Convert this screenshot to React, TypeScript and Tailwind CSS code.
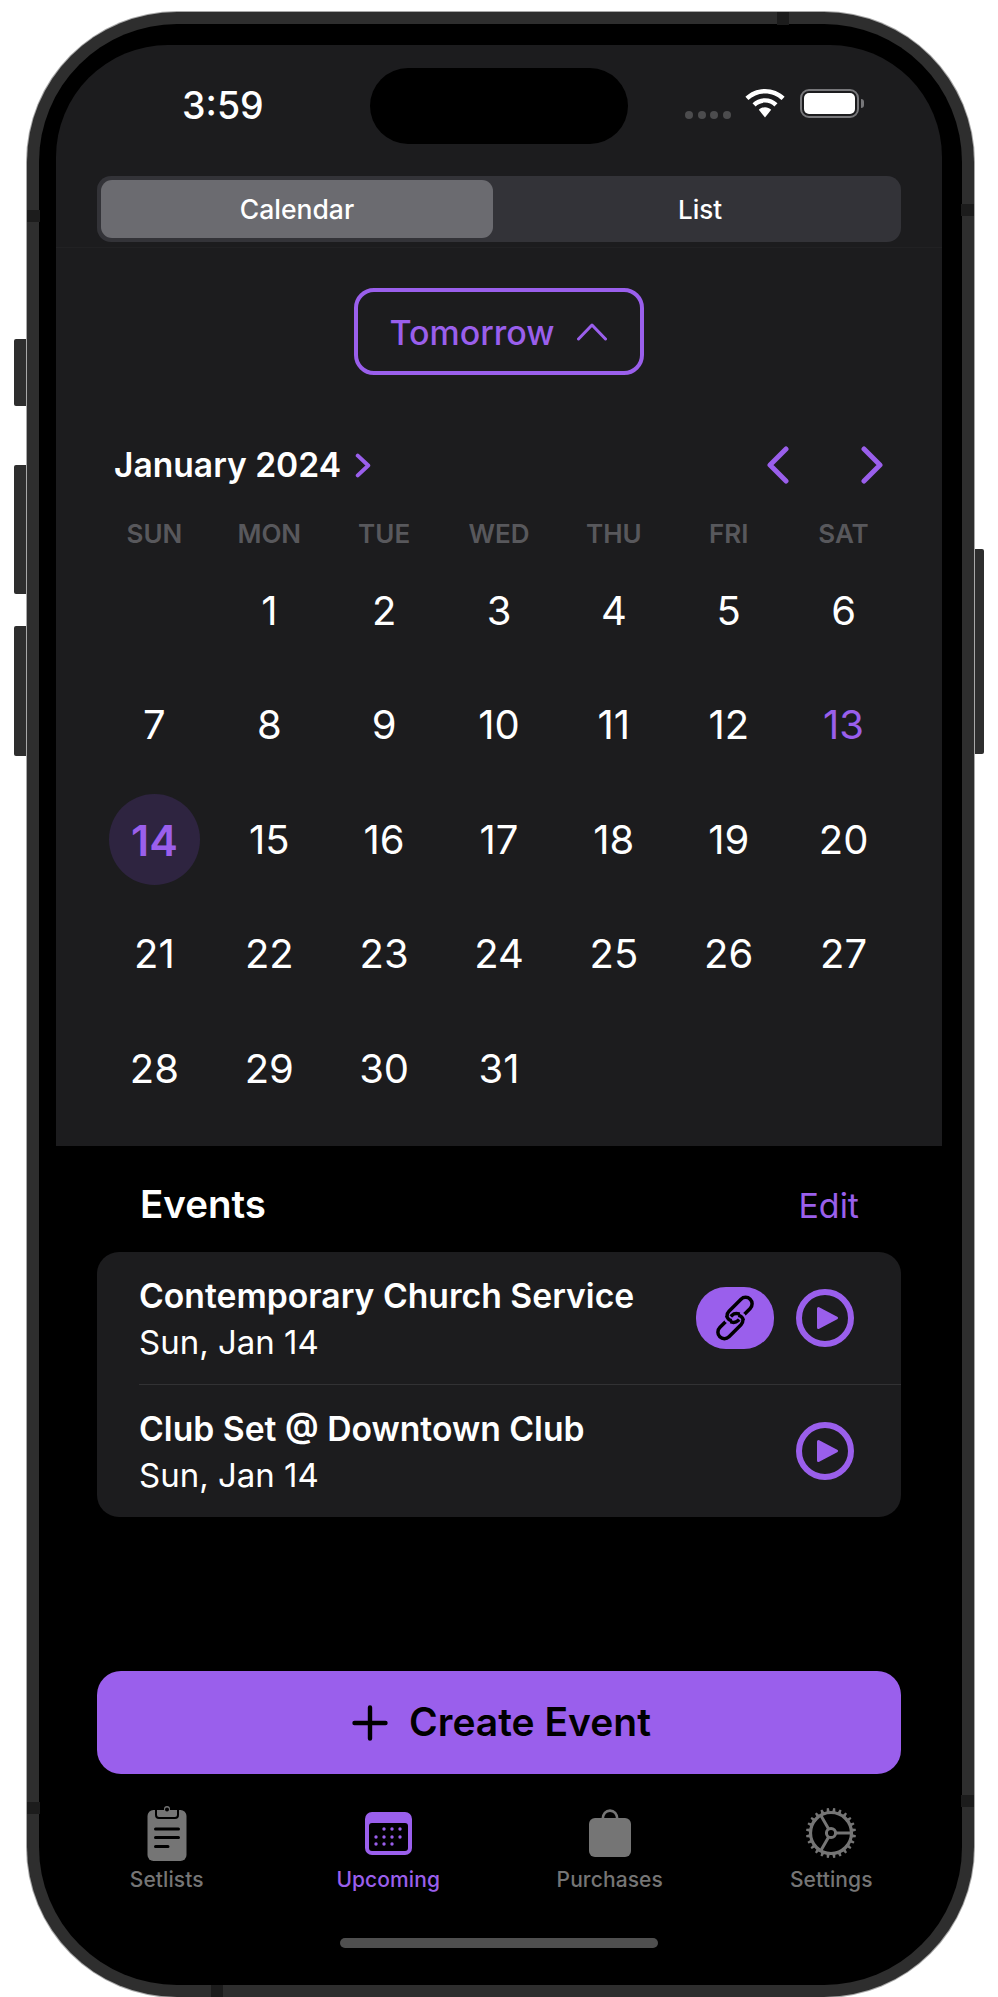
import React from "react";

const P = "#9a5fec";

function Chevron({ d, className, sw = 5 }: { d: string; className: string; sw?: number }) {
  return (
    <svg viewBox="0 0 24 38" className={className} fill="none" stroke={P} strokeWidth={sw} strokeLinecap="round" strokeLinejoin="round">
      <path d={d} />
    </svg>
  );
}

function Play() {
  return (
    <svg width="58" height="58" viewBox="0 0 58 58" className="shrink-0">
      <circle cx="29" cy="29" r="26" fill="none" stroke={P} strokeWidth="6" />
      <path d="M22.5 19.5 L40.5 29 L22.5 38.5 Z" fill={P} stroke={P} strokeWidth="3" strokeLinejoin="round" />
    </svg>
  );
}

function LinkIcon() {
  return (
    <svg width="44" height="44" viewBox="-22 -22 44 44" fill="none" className="overflow-visible">
      <g transform="rotate(-45)">
        <rect x="-24" y="-4" width="30" height="13" rx="6.5" stroke="#000" strokeWidth="3.5" />
        <rect x="-6" y="-9" width="30" height="13" rx="6.5" stroke="#000" strokeWidth="3.5" />
        <path d="M-5.2 -7 Q-6.4 -4 -5.2 -1" stroke={P} strokeWidth="7.5" />
        <path d="M-4.4 -7.4 Q-6.4 -4 -4.4 -0.4" stroke="#000" strokeWidth="3.5" />
        <path d="M5.2 1 Q6.4 4 5.2 7" stroke={P} strokeWidth="7.5" />
        <path d="M4.4 0.4 Q6.4 4 4.4 7.4" stroke="#000" strokeWidth="3.5" />
      </g>
    </svg>
  );
}

function Clipboard() {
  return (
    <svg width="40" height="58" viewBox="0 0 40 58">
      <rect x="0.5" y="6" width="39" height="51" rx="6" fill="#757575" />
      <path d="M9 5 H16 C16 -0.5 24 -0.5 24 5 H31 V11 Q31 14 28 14 H12 Q9 14 9 11 Z" fill="#757575" stroke="#000" strokeWidth="2" />
      <circle cx="20" cy="5.5" r="2" fill="#000" />
      <path d="M8.5 25 H31.5 M8.5 33.5 H31.5 M8.5 42.5 H21" stroke="#000" strokeWidth="3" strokeLinecap="round" />
    </svg>
  );
}

function CalendarIcon() {
  const dots = [
    [19, 17], [27, 17], [35, 17],
    [11, 25], [19, 25], [27, 25], [35, 25],
    [11, 32], [19, 32], [27, 32],
  ];
  return (
    <svg width="47" height="43" viewBox="0 0 47 43">
      <rect width="47" height="43" rx="7" fill={P} />
      <rect x="4" y="11" width="39" height="28" rx="3" fill="#000" />
      {dots.map(([x, y]) => (
        <circle key={`${x}-${y}`} cx={x} cy={y} r="1.7" fill={P} />
      ))}
    </svg>
  );
}

function Bag() {
  return (
    <svg width="42" height="48" viewBox="0 0 42 48">
      <path d="M13.5 11 C13.5 -1.5 28.5 -1.5 28.5 11" fill="none" stroke="#757575" strokeWidth="2.6" />
      <rect x="0" y="9" width="42" height="39" rx="6" fill="#757575" />
    </svg>
  );
}

function Gear() {
  const teeth = Array.from({ length: 24 }, (_, i) => i * 15);
  return (
    <svg width="52" height="52" viewBox="-26 -26 52 52" fill="none" stroke="#757575">
      <circle r="20.5" strokeWidth="3.2" />
      {teeth.map((a) => (
        <path key={a} d="M-1.8 -20 L-1 -25 L1 -25 L1.8 -20 Z" fill="#757575" stroke="none" transform={`rotate(${a + 7.5})`} />
      ))}
      <circle r="4.6" strokeWidth="3" />
      <path d="M5 0 H20 M-2.5 4.3 L-10 17.3 M-2.5 -4.3 L-10 -17.3" strokeWidth="3" />
    </svg>
  );
}

function Wifi() {
  return (
    <svg width="40" height="29" viewBox="0 0 40 29" fill="#fff">
      <path d="M20 0 C27.5 0 34.5 3 39.6 7.8 L36.6 11 C32.3 6.9 26.4 4.4 20 4.4 C13.6 4.4 7.7 6.9 3.4 11 L0.4 7.8 C5.5 3 12.5 0 20 0 Z" />
      <path d="M20 9.2 C24.8 9.2 29.2 11.1 32.5 14.2 L29.4 17.4 C27 15 23.6 13.6 20 13.6 C16.4 13.6 13 15 10.6 17.4 L7.5 14.2 C10.8 11.1 15.2 9.2 20 9.2 Z" />
      <path d="M20 18.2 C22.4 18.2 24.6 19.1 26.2 20.7 L20 28.5 L13.8 20.7 C15.4 19.1 17.6 18.2 20 18.2 Z" />
    </svg>
  );
}

const week = ["SUN", "MON", "TUE", "WED", "THU", "FRI", "SAT"];
const days: (number | null)[] = [null, ...Array.from({ length: 31 }, (_, i) => i + 1)];

function Day({ n }: { n: number | null }) {
  if (n === null) return <div />;
  if (n === 14)
    return (
      <div className="flex items-center justify-center">
        <div className="flex h-[91px] w-[91px] items-center justify-center rounded-full bg-[#2e2440] text-[43px] font-semibold text-[#9a5fec]">14</div>
      </div>
    );
  return <div className={`flex items-center justify-center text-[40px] font-normal ${n === 13 ? "text-[#9a5fec]" : "text-white"}`}>{n}</div>;
}

function EventRow({ title, linked }: { title: string; linked?: boolean }) {
  return (
    <div className="flex h-[132px] items-center pl-[42px] pr-[47px]">
      <div className="min-w-0 flex-1">
        <div className="h-[47px] whitespace-nowrap text-[33.7px] font-semibold leading-[47px] text-white">{title}</div>
        <div className="h-[46px] text-[33px] font-normal leading-[46px] text-white">Sun, Jan 14</div>
      </div>
      {linked && (
        <div className="mr-[22px] flex h-[62px] w-[78px] items-center justify-center rounded-[30px] bg-[#9a5fec]">
          <LinkIcon />
        </div>
      )}
      <Play />
    </div>
  );
}

function Tab({ label, active, children }: { label: string; active?: boolean; children: React.ReactNode }) {
  return (
    <div className="flex flex-col items-center">
      <div className="flex h-[58px] items-center justify-center">{children}</div>
      <div className={`mt-[5px] h-[26px] text-[21px] font-medium leading-[26px] tracking-[0.1px] ${active ? "text-[#9a5fec]" : "text-[#757575]"}`}>{label}</div>
    </div>
  );
}

export default function App() {
  return (
    <div className="relative h-[1997px] w-[998px] overflow-hidden bg-white pl-[27px] pt-[12px] font-['Inter',sans-serif]">
      {/* hardware buttons */}
      <div className="absolute left-[14px] top-[339px] h-[67px] w-[12px] rounded-l-[2px] bg-[#2e2e2e]" />
      <div className="absolute left-[14px] top-[465px] h-[129px] w-[12px] rounded-l-[2px] bg-[#2e2e2e]" />
      <div className="absolute left-[14px] top-[626px] h-[130px] w-[12px] rounded-l-[2px] bg-[#2e2e2e]" />
      <div className="absolute left-[975px] top-[549px] h-[205px] w-[9px] rounded-r-[2px] bg-[#2e2e2e]" />

      <div className="relative h-[1985px] w-[947px] rounded-[150px] bg-[#2e2e2e] p-[12px] shadow-[0_0_0_1px_#a8a8a8]">
        {/* antenna bands */}
        <div className="absolute left-[750px] top-0 h-[13px] w-[12px] bg-[#1c1c1c]" />
        <div className="absolute left-0 top-[198px] h-[12px] w-[13px] bg-[#1c1c1c]" />
        <div className="absolute right-0 top-[192px] h-[12px] w-[13px] bg-[#1c1c1c]" />
        <div className="absolute bottom-0 left-[184px] h-[12px] w-[12px] bg-[#1c1c1c]" />
        <div className="absolute left-0 top-[1790px] h-[12px] w-[13px] bg-[#1c1c1c]" />
        <div className="absolute right-0 top-[1783px] h-[12px] w-[13px] bg-[#1c1c1c]" />

        <div className="h-[1961px] w-[923px] rounded-[138px] bg-black px-[17px] pt-[21px]">
          <div className="h-[1938px] w-[886px] overflow-hidden rounded-t-[112px] rounded-b-[120px] bg-black">
            {/* top sheet */}
            <div className="bg-[#1c1c1e] pb-[20px]">
              <div className="h-[203px] border-b border-[#212123]">
                <div className="flex h-[131px] items-start">
                  <div className="ml-[126px] mt-[39px] w-[80px] whitespace-nowrap text-[37.5px] font-medium leading-[44px] text-white">3:59</div>
                  <div className="ml-[108px] mt-[23px] h-[76px] w-[258px] rounded-full bg-black" />
                  <div className="ml-[57px] mt-[66px] flex gap-[4.5px]">
                    <span className="h-[8px] w-[8px] rounded-full bg-[#4c4c4e]" />
                    <span className="h-[8px] w-[8px] rounded-full bg-[#4c4c4e]" />
                    <span className="h-[8px] w-[8px] rounded-full bg-[#4c4c4e]" />
                    <span className="h-[8px] w-[8px] rounded-full bg-[#4c4c4e]" />
                  </div>
                  <div className="ml-[14px] mt-[44px] flex">
                    <Wifi />
                  </div>
                  <div className="ml-[15px] mt-[44px] flex items-center">
                    <div className="h-[29px] w-[59px] rounded-[9px] border-2 border-[#77777a] p-[2px]">
                      <div className="h-full w-full rounded-[5px] bg-white" />
                    </div>
                    <div className="ml-[2px] h-[9px] w-[3px] rounded-r-full bg-[#77777a]" />
                  </div>
                </div>
                <div className="mx-[41px] flex h-[66px] rounded-[14px] bg-[#333338] p-[4px]">
                  <div className="flex h-[58px] w-[392px] items-center justify-center rounded-[11px] bg-[#6b6b70] pt-[1px] text-[26.5px] font-medium text-white">Calendar</div>
                  <div className="flex flex-1 items-center justify-center pl-[10px] text-[26px] font-medium text-white">List</div>
                </div>
              </div>

              <div className="mt-[40px] flex justify-center">
                <div className="flex h-[87px] w-[290px] items-center justify-center gap-[22px] rounded-[20px] border-[4px] border-[#9a5fec] pr-[2px] pt-[1px] text-[34px] font-medium text-[#9a5fec]">
                  <span>Tomorrow</span>
                  <svg width="30" height="18" viewBox="0 0 30 18" fill="none" stroke={P} strokeWidth="3" strokeLinecap="round" strokeLinejoin="round">
                    <path d="M1.5 16 L15 2 L28.5 16" />
                  </svg>
                </div>
              </div>

              <div className="mt-[65px] flex h-[50px] items-center pl-[58px] pr-[58px]">
                <span className="text-[33.6px] font-semibold text-white">January 2024</span>
                <Chevron d="M4 4 L20 19 L4 34" sw={6} className="ml-[14px] h-[25px] w-[16px]" />
                <div className="flex-1" />
                <Chevron d="M20 3 L4 19 L20 35" className="h-[38px] w-[24px]" />
                <Chevron d="M4 3 L20 19 L4 35" className="ml-[70px] h-[38px] w-[24px]" />
              </div>

              <div className="mx-[41px] mt-[29px] grid h-[30px] grid-cols-7 text-center text-[26px] font-semibold leading-[30px] text-[#58585c]">
                {week.map((w) => (
                  <div key={w}>{w}</div>
                ))}
              </div>

              <div className="mx-[41px] mt-[4.5px] grid grid-cols-7 auto-rows-[114.5px]">
                {days.map((n, i) => (
                  <Day key={i} n={n} />
                ))}
              </div>
            </div>

            {/* events */}
            <div className="flex h-[106px] items-center pl-[84px] pr-[83px] pt-[12px]">
              <span className="flex-1 text-[38.5px] font-semibold text-white">Events</span>
              <span className="text-[34px] font-normal text-[#9a5fec]">Edit</span>
            </div>
            <div className="mx-[41px] h-[265px] rounded-[22px] bg-[#1c1c1e]">
              <EventRow title="Contemporary Church Service" linked />
              <div className="ml-[42px] h-px bg-[#323234]" />
              <EventRow title="Club Set @ Downtown Club" />
            </div>

            <div className="mx-[41px] mt-[154px] flex h-[103px] items-center justify-center rounded-[24px] bg-[#9a5fec] pl-[5px] text-[39px] font-semibold text-black">
              <svg width="36" height="36" viewBox="0 0 36 36" className="mr-[21px]" stroke="#000" strokeWidth="4.4" strokeLinecap="round">
                <path d="M18 2.5 V33.5 M2.5 18 H33.5" />
              </svg>
              <span>Create Event</span>
            </div>

            <div className="mt-[30px] grid grid-cols-4">
              <Tab label="Setlists"><Clipboard /></Tab>
              <Tab label="Upcoming" active><CalendarIcon /></Tab>
              <Tab label="Purchases"><Bag /></Tab>
              <Tab label="Settings"><Gear /></Tab>
            </div>

            <div className="mx-auto mt-[45px] h-[10px] w-[318px] rounded-full bg-[#4f4f4f]" />
          </div>
        </div>
      </div>
    </div>
  );
}
